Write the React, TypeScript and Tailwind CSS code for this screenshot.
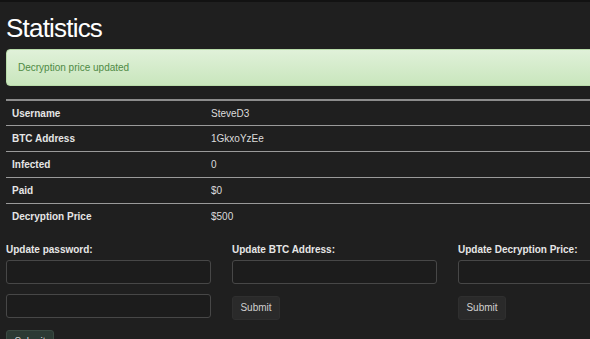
import React from 'react';

const stats: { label: string; value: string }[] = [
    { label: 'Username', value: 'SteveD3' },
    { label: 'BTC Address', value: '1GkxoYzEe' },
    { label: 'Infected', value: '0' },
    { label: 'Paid', value: '$0' },
    { label: 'Decryption Price', value: '$500' },
];

const Field: React.FC = () => (
    <input
        type="text"
        className="block w-[205px] h-[24px] bg-[#1c1c1c] border border-[#474747] rounded-[3px] outline-none"
    />
);

const SubmitButton: React.FC<{ tint?: boolean }> = ({ tint }) => (
    <button
        type="button"
        className={
            tint
                ? 'h-[24px] w-[48px] rounded-[3px] bg-[#2c3a34] border border-[#3a4a42] text-[10px] text-[#d8d8d8]'
                : 'h-[24px] w-[48px] rounded-[3px] bg-[#2a2a2a] border border-[#2f2f2f] text-[10px] text-[#d0d0d0]'
        }
    >
        Submit
    </button>
);

export default function App() {
    return (
        <div className="w-[590px] h-[339px] overflow-hidden bg-[#1f1f1f] font-['Liberation_Sans',Arial,sans-serif]">
            {/* top strip */}
            <div className="h-[2px] bg-[#121212]" />

            <div className="w-[700px] pl-[6px]">
                {/* Title */}
                <h1 className="pt-[13px] pb-[7px] text-[26px] leading-[27px] tracking-[-0.8px] text-white">Statistics</h1>

                {/* Alert */}
                <div className="h-[37px] flex items-center pl-[11px] rounded-[4px] border border-[#b9dcaa] bg-gradient-to-b from-[#e0f1d9] to-[#c9e6bd] text-[10px] text-[#4f8a45]">
                    Decryption price updated
                </div>

                {/* Stats table */}
                <div className="mt-[13px] border-t-2 border-[#8c8c8c]">
                    {stats.map((row, i) => (
                        <div
                            key={row.label}
                            className={
                                i === 0
                                    ? 'flex h-[24px] items-center text-[10px]'
                                    : 'flex h-[26px] items-center text-[10px] border-t border-[#9a9a9a]'
                            }
                        >
                            <div className="w-[205px] pl-[6px] font-bold text-[#e6e6e6]">{row.label}</div>
                            <div className="text-[#dcdcdc]">{row.value}</div>
                        </div>
                    ))}
                </div>

                {/* Update forms */}
                <div className="mt-[14px] flex gap-[21px]">
                    <div className="w-[205px] flex flex-col">
                        <label className="text-[10px] leading-[14px] font-bold text-[#e6e6e6] mb-[3px]">Update password:</label>
                        <Field />
                        <div className="mt-[10px]"><Field /></div>
                        <div className="mt-[10px]"><SubmitButton tint /></div>
                    </div>
                    <div className="w-[205px] flex flex-col">
                        <label className="text-[10px] leading-[14px] font-bold text-[#e6e6e6] mb-[3px]">Update BTC Address:</label>
                        <Field />
                        <div className="mt-[10px]"><SubmitButton /></div>
                    </div>
                    <div className="w-[205px] flex flex-col">
                        <label className="text-[10px] leading-[14px] font-bold text-[#e6e6e6] mb-[3px]">Update Decryption Price:</label>
                        <Field />
                        <div className="mt-[10px]"><SubmitButton /></div>
                    </div>
                </div>
            </div>
        </div>
    );
}
